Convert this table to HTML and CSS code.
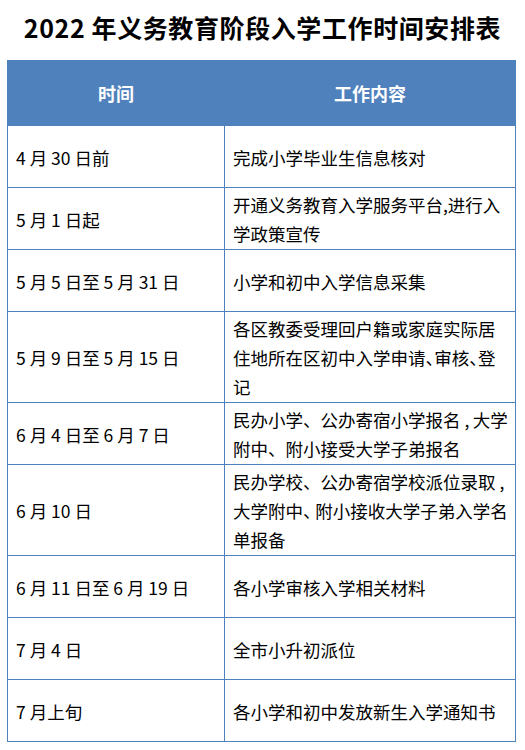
FILE: index.html
```html
<!DOCTYPE html>
<html lang="zh-CN">
<head>
<meta charset="utf-8">
<link rel="stylesheet" href="styles.css">
</head>
<body>
<h1 class="title">2022 年义务教育阶段入学工作时间安排表</h1>
<table class="schedule">
  <thead>
    <tr><th class="col-time">时间</th><th class="col-task">工作内容</th></tr>
  </thead>
  <tbody>
    <tr><td class="col-time">4 月 30 日前</td><td class="col-task">完成小学毕业生信息核对</td></tr>
    <tr><td class="col-time">5 月 1 日起</td><td class="col-task">开通义务教育入学服务平台,进行入<br>学政策宣传</td></tr>
    <tr><td class="col-time">5 月 5 日至 5 月 31 日</td><td class="col-task">小学和初中入学信息采集</td></tr>
    <tr><td class="col-time">5 月 9 日至 5 月 15 日</td><td class="col-task">各区教委受理回户籍或家庭实际居<br>住地所在区初中入学申请<span class="half">、</span>审核<span class="half">、</span>登<br>记</td></tr>
    <tr><td class="col-time">6 月 4 日至 6 月 7 日</td><td class="col-task">民办小学、公办寄宿小学报名 ,&thinsp;大学<br>附中、附小接受大学子弟报名</td></tr>
    <tr><td class="col-time">6 月 10 日</td><td class="col-task">民办学校、公办寄宿学校派位录取 ,<br>大学附中<span class="half">、</span>&thinsp;附小接收大学子弟入学名<br>单报备</td></tr>
    <tr><td class="col-time">6 月 11 日至 6 月 19 日</td><td class="col-task">各小学审核入学相关材料</td></tr>
    <tr><td class="col-time">7 月 4 日</td><td class="col-task">全市小升初派位</td></tr>
    <tr><td class="col-time">7 月上旬</td><td class="col-task">各小学和初中发放新生入学通知书</td></tr>
  </tbody>
</table>
</body>
</html>
```
FILE: styles.css
```css
html, body {
  margin: 0;
  padding: 0;
  background: #ffffff;
}
body {
  font-family: "Noto Sans CJK SC", "Noto Sans", sans-serif;
  color: #000;
}
.title {
  margin: 0;
  padding-top: 9px;
  height: 36px;
  line-height: 36px;
  font-size: 25px;
  font-weight: bold;
  text-align: center;
  letter-spacing: 0.6px;
}
.schedule {
  margin: 15px 0 0 7px;
  width: 509px;
  border-collapse: collapse;
  table-layout: fixed;
  font-size: 17.5px;
}
.schedule th {
  background: #4f81bd;
  color: #ffffff;
  font-size: 18px;
  font-weight: bold;
  height: 64px;
  padding: 0;
  text-align: center;
  vertical-align: middle;
  border: 1px solid #4f81bd;
}
.schedule th.col-task {
  border-left: 1px dotted #000;
}
.schedule td {
  height: 62px;
  line-height: 29px;
  padding: 2px 0 1px 8px;
  vertical-align: middle;
  border: 1px solid #4f81bd;
  box-sizing: border-box;
  white-space: nowrap;
}
.schedule td.col-task {
  border-left: 1px dotted #000;
}
.half {
  font-feature-settings: "halt";
}
.col-time {
  width: 216px;
}
```
